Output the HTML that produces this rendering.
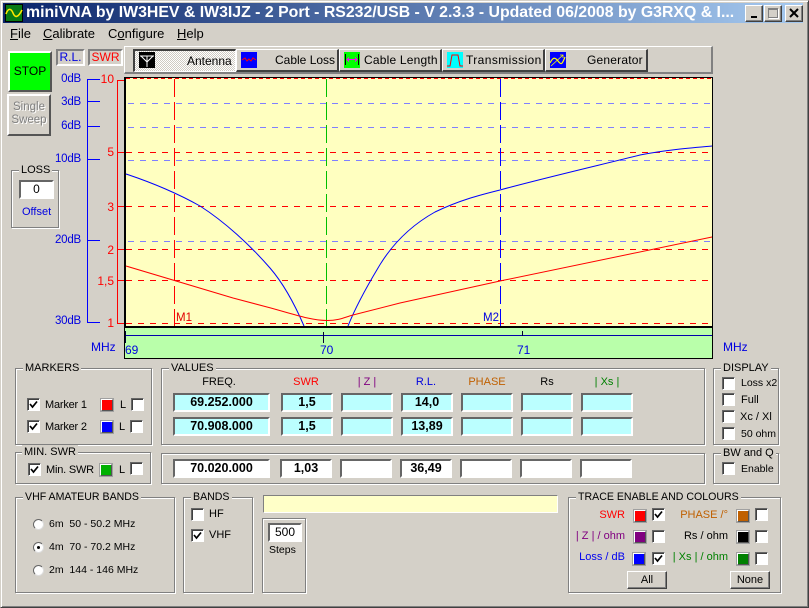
<!DOCTYPE html>
<html><head><meta charset="utf-8"><title>miniVNA</title>
<style>
html,body{margin:0;padding:0;width:809px;height:608px;overflow:hidden;background:#d4d0c8}
body{position:relative;font:11px/14px "Liberation Sans",sans-serif;color:#000}
div,svg{position:absolute;box-sizing:border-box}
svg{display:block;overflow:visible}
.t{white-space:nowrap;height:14px}
.r{color:#f00;font-size:12px}
.rb{font-size:12px;color:#0000e0}
.db{font-size:11.5px;color:#0000e0;letter-spacing:-.2px}
.up{background:#d4d0c8;border:1px solid;border-color:#fff #404040 #404040 #fff;box-shadow:inset -1px -1px 0 #808080}
.in{border:2px solid;border-color:#666 #fff #fff #666;background:#fff;font:bold 12.5px/14px "Liberation Sans",sans-serif;text-align:center}
.c{background:#bbffff}
.g{border:1px solid #808080;box-shadow:1px 1px 0 #fff,inset 1px 1px 0 #fff}
.l{position:absolute;top:-8px;background:#d4d0c8;padding:0 2px;white-space:nowrap}
.cb{width:13px;height:13px;border:1px solid;border-color:#666 #fff #fff #666;background:#fff;box-shadow:inset 1px 1px 0 #404040}
.cb svg{left:1px;top:1px}
.col{width:14px;height:14px;border:2px solid;border-color:#fff #555 #555 #fff;outline:1px solid #a0a0a0;outline-offset:-1px}
.tb{height:23px;background:#d4d0c8;border:1px solid;border-color:#fff #404040 #404040 #fff;font-size:12px;line-height:21px;white-space:nowrap}
.ic{width:16px;height:16px;top:52px}
.h{text-align:center;font-size:11px;width:60px;top:375px}
.rad{width:11px;height:11px;border-radius:50%;background:#fff;border:1px solid;border-color:#666 #ddd #ddd #666}
</style></head><body>
<!-- window frame -->
<div style="left:0;top:0;width:809px;height:608px;border:1px solid;border-color:#d4d0c8 #404040 #404040 #d4d0c8;box-shadow:inset 1px 1px 0 #fff,inset -1px -1px 0 #808080"></div>
<!-- title bar -->
<div style="left:3px;top:3px;width:800px;height:20px;background:linear-gradient(90deg,#0a246a,#a6caf0)"></div>
<svg style="left:5px;top:4px" width="18" height="18"><rect x="0.5" y="0.5" width="17" height="17" fill="#0a7a14" stroke="#000"/><path d="M1 10 C3 4 6 4 8 9 S13 14 17 6" fill="none" stroke="#ffe800" stroke-width="1.6"/></svg>
<div class="t" style="left:26px;top:4px;height:18px;color:#fff;font:bold 15.85px/18px 'Liberation Sans',sans-serif">miniVNA by IW3HEV &amp; IW3IJZ - 2 Port - RS232/USB - V 2.3.3 - Updated 06/2008 by G3RXQ &amp; I...</div>
<div class="up" style="left:745px;top:5px;width:18px;height:17px"><div style="left:5px;top:10px;width:6px;height:2px;background:#000"></div></div>
<div class="up" style="left:764px;top:5px;width:18px;height:17px"><div style="left:3px;top:2px;width:10px;height:10px;border:1px solid #808080;border-top-width:2px;box-shadow:1px 1px 0 #fff"></div></div>
<div class="up" style="left:785px;top:5px;width:18px;height:17px"><svg style="left:3px;top:2px" width="10" height="10"><path d="M1 1L9 9M9 1L1 9" stroke="#000" stroke-width="2"/></svg></div>
<!-- menu -->
<div class="t" style="left:10px;top:27px;font-size:13px"><u>F</u>ile</div>
<div class="t" style="left:43px;top:27px;font-size:13px"><u>C</u>alibrate</div>
<div class="t" style="left:108px;top:27px;font-size:13px">C<u>o</u>nfigure</div>
<div class="t" style="left:177px;top:27px;font-size:13px"><u>H</u>elp</div>
<!-- stop / sweep -->
<div style="left:8px;top:51px;width:44px;height:41px;background:#00ff00;border:2px solid;border-color:#fff #555 #555 #fff;text-align:center;font-size:12px;line-height:37px">STOP</div>
<div style="left:7px;top:94px;width:44px;height:42px;background:#d4d0c8;border:2px solid;border-color:#fff #555 #555 #fff;text-align:center;font-size:11.5px;line-height:13px;padding-top:5px;color:#808080;text-shadow:1px 1px 0 #fff">Single<br>Sweep</div>
<div style="left:56px;top:49px;width:29px;height:17px;border:2px solid;border-color:#808080 #fff #fff #808080;color:#0000e0;font-size:12px;line-height:13px;text-align:center">R.L.</div>
<div style="left:88px;top:49px;width:35px;height:17px;border:2px solid;border-color:#808080 #fff #fff #808080;color:#f00;font-size:12px;line-height:13px;text-align:center">SWR</div>
<!-- toolbar -->
<div style="left:124px;top:46px;width:589px;height:28px;border:1px solid;border-color:#fff #808080 #808080 #fff;border-width:1px 2px 2px 1px"></div>
<div class="tb" style="left:133px;top:49px;width:103px;border-color:#404040 #fff #fff #404040;border-width:2px 1px 1px 2px;background:repeating-conic-gradient(#fff 0 25%,#cfcbc3 0 50%) 0 0/2px 2px"></div>
<div class="tb" style="left:236px;top:49px;width:103px;border-right-width:2px;border-bottom-width:2px"></div>
<div class="tb" style="left:339px;top:49px;width:103px;border-right-width:2px;border-bottom-width:2px"></div>
<div class="tb" style="left:442px;top:49px;width:103px;border-right-width:2px;border-bottom-width:2px"></div>
<div class="tb" style="left:545px;top:49px;width:103px;border-right-width:2px;border-bottom-width:2px"></div>
<div class="t" style="left:187px;top:54px;font-size:12px">Antenna</div>
<div class="t" style="left:275px;top:53px;font-size:12px">Cable Loss</div>
<div class="t" style="left:364px;top:53px;font-size:12px;letter-spacing:.2px">Cable Length</div>
<div class="t" style="left:466px;top:53px;font-size:12px;letter-spacing:.4px">Transmission</div>
<div class="t" style="left:587px;top:53px;font-size:12px;letter-spacing:.2px">Generator</div>
<svg class="ic" style="left:139px" viewBox="0 0 16 16"><rect width="16" height="16" fill="#000"/><path d="M1 4H15M8 4V15M2 4L8 10L14 4" fill="none" stroke="#fff"/></svg>
<svg class="ic" style="left:241px" viewBox="0 0 16 16"><rect width="16" height="16" fill="#00f"/><path d="M1 8L4 6L6 9L8 7L10 9L12 6L15 8" fill="none" stroke="#f00"/></svg>
<svg class="ic" style="left:344px" viewBox="0 0 16 16"><rect width="16" height="16" fill="#0f0"/><path d="M1.5 2V13M14.5 2V13" stroke="#000" fill="none"/><path d="M3 7.5H13M5 5.5L3 7.5L5 9.5M11 5.5L13 7.5L11 9.5" stroke="#f0f" fill="none"/></svg>
<svg class="ic" style="left:447px" viewBox="0 0 16 16"><rect width="16" height="16" fill="#0ff"/><path d="M0 14H3L5 3H11L13 14H16" fill="none" stroke="#f00"/></svg>
<svg class="ic" style="left:550px" viewBox="0 0 16 16"><rect width="16" height="16" fill="#00f"/><path d="M0 11C3 5 5 5 8 9S12 13 15 5" fill="none" stroke="#ff0" stroke-width="1.2"/><path d="M1 14L13 3M10 3H13V6" fill="none" stroke="#ff0" stroke-width=".8"/></svg>
<!-- plot -->
<svg style="left:0;top:0" width="809" height="608">
<rect x="124" y="77" width="589" height="282" fill="#000"/>
<rect x="126" y="78" width="586" height="248" fill="#ffffc0"/>
<rect x="125" y="328" width="587" height="30" fill="#b9ffaa"/>
<g stroke="#8080ff" stroke-dasharray="6 6" fill="none">
<path d="M128 103.500H710M128 127.500H710M128 160.500H710M128 241.500H710"/>
</g>
<g stroke="#f00" stroke-dasharray="6 6" fill="none">
<path d="M126 152.500H710M126 206.500H710M126 249.500H710M126 280.500H710M126 323.500H710"/>
<path d="M126 78.500H712" stroke-dasharray="4 3"/>
</g>
<g fill="none" stroke-dasharray="18 5">
<path d="M174.500 79V326" stroke="#f00"/>
<path d="M326.500 79V326" stroke="#00c000"/>
<path d="M500.500 79V326" stroke="#00f"/>
</g>
<path d="M126 174C150 182 175 192 200 206C225 222 250 245 270 268C283 283 295 305 304 326" fill="none" stroke="#00f"/>
<path d="M348 326C356 306 366 288 378 268C392 244 410 226 435 212C460 200 480 195 500 190C540 179 600 165 640 155C665 150 690 148 712 146" fill="none" stroke="#00f"/>
<path d="M126 266L233 298L267 307C290 313 310 320.500 327 320.500C340 320.500 345 317 353 315L400 303L500 281L712 237" fill="none" stroke="#f00"/>
<path d="M126 335.500H712" stroke="#00a"/>
<path d="M125.500 331V343M323.500 332V343M522.500 331V336" stroke="#003"/>
<!-- left axes -->
<path d="M87.500 79V322M87 79.500H100M87 101.500H100M87 126.500H100M87 159.500H100M87 240.500H100M87 322.500H100" stroke="#00f" fill="none"/>
<path d="M117.500 80V324M117 323.500H124M117 80.500H124M117 152.500H124M117 206.500H124M117 249.500H124M117 280.500H124" stroke="#f00" fill="none"/>
</svg>
<div class="t" style="left:176px;top:311px;color:#e00000;font-size:11.5px">M1</div>
<div class="t" style="left:483px;top:311px;color:#0000e0;font-size:11.5px">M2</div>
<div class="t rb" style="left:125px;top:343px">69</div>
<div class="t rb" style="left:320px;top:343px">70</div>
<div class="t rb" style="left:517px;top:343px">71</div>
<div class="t rb" style="left:91px;top:340px">MHz</div>
<div class="t rb" style="left:723px;top:340px">MHz</div>
<div class="t db" style="left:40px;width:41px;text-align:right;top:72px">0dB</div>
<div class="t db" style="left:40px;width:41px;text-align:right;top:95px">3dB</div>
<div class="t db" style="left:40px;width:41px;text-align:right;top:119px">6dB</div>
<div class="t db" style="left:40px;width:41px;text-align:right;top:152px">10dB</div>
<div class="t db" style="left:40px;width:41px;text-align:right;top:233px">20dB</div>
<div class="t db" style="left:40px;width:41px;text-align:right;top:314px">30dB</div>
<div class="t r" style="left:90px;width:24px;text-align:right;top:72px">10</div>
<div class="t r" style="left:90px;width:24px;text-align:right;top:145px">5</div>
<div class="t r" style="left:90px;width:24px;text-align:right;top:200px">3</div>
<div class="t r" style="left:90px;width:24px;text-align:right;top:243px">2</div>
<div class="t r" style="left:90px;width:24px;text-align:right;top:274px">1,5</div>
<div class="t r" style="left:90px;width:24px;text-align:right;top:316px">1</div>
<!-- loss -->
<div class="g" style="left:11px;top:170px;width:48px;height:58px"><div class="l" style="left:7px">LOSS</div></div>
<div class="in" style="left:19px;top:180px;width:35px;height:19px;font:12px/15px 'Liberation Sans',sans-serif">0</div>
<div class="t" style="left:22px;top:205px;color:#0000e0;font-size:11px">Offset</div>
<!-- markers -->
<div class="g" style="left:15px;top:368px;width:137px;height:77px"><div class="l" style="left:7px">MARKERS</div></div>
<div class="cb" style="left:27px;top:398px"><svg width="9" height="9"><path d="M1 4L3.500 7L8 1.500" fill="none" stroke="#000" stroke-width="1.700"/></svg></div>
<div class="t" style="left:45px;top:398px;letter-spacing:-.2px">Marker 1</div>
<div class="col" style="left:100px;top:398px;background:#f00"></div>
<div class="t" style="left:120px;top:398px">L</div>
<div class="cb" style="left:131px;top:398px"></div>
<div class="cb" style="left:27px;top:420px"><svg width="9" height="9"><path d="M1 4L3.500 7L8 1.500" fill="none" stroke="#000" stroke-width="1.700"/></svg></div>
<div class="t" style="left:45px;top:420px;letter-spacing:-.2px">Marker 2</div>
<div class="col" style="left:100px;top:420px;background:#00f"></div>
<div class="t" style="left:119px;top:420px">L</div>
<div class="cb" style="left:130px;top:420px"></div>
<div class="g" style="left:15px;top:452px;width:136px;height:32px"><div class="l" style="left:6px">MIN. SWR</div></div>
<div class="cb" style="left:28px;top:463px"><svg width="9" height="9"><path d="M1 4L3.500 7L8 1.500" fill="none" stroke="#000" stroke-width="1.700"/></svg></div>
<div class="t" style="left:46px;top:463px;letter-spacing:-.2px">Min. SWR</div>
<div class="col" style="left:99px;top:463px;background:#00b000"></div>
<div class="t" style="left:119px;top:463px">L</div>
<div class="cb" style="left:130px;top:462px"></div>
<!-- values -->
<div class="g" style="left:161px;top:368px;width:544px;height:77px"><div class="l" style="left:7px">VALUES</div></div>
<div class="t h" style="left:189px">FREQ.</div>
<div class="t h" style="left:276px;color:#f00">SWR</div>
<div class="t h" style="left:337px;color:#800080">| Z |</div>
<div class="t h" style="left:396px;color:#0000e0">R.L.</div>
<div class="t h" style="left:457px;color:#c06000">PHASE</div>
<div class="t h" style="left:517px">Rs</div>
<div class="t h" style="left:577px;color:#008000">| Xs |</div>
<div class="in c" style="left:173px;top:393px;width:97px;height:19px">69.252.000</div>
<div class="in c" style="left:281px;top:393px;width:52px;height:19px">1,5</div>
<div class="in c" style="left:341px;top:393px;width:52px;height:19px"></div>
<div class="in c" style="left:401px;top:393px;width:52px;height:19px">14,0</div>
<div class="in c" style="left:461px;top:393px;width:52px;height:19px"></div>
<div class="in c" style="left:521px;top:393px;width:52px;height:19px"></div>
<div class="in c" style="left:581px;top:393px;width:52px;height:19px"></div>
<div class="in c" style="left:173px;top:417px;width:97px;height:19px">70.908.000</div>
<div class="in c" style="left:281px;top:417px;width:52px;height:19px">1,5</div>
<div class="in c" style="left:341px;top:417px;width:52px;height:19px"></div>
<div class="in c" style="left:401px;top:417px;width:52px;height:19px">13,89</div>
<div class="in c" style="left:461px;top:417px;width:52px;height:19px"></div>
<div class="in c" style="left:521px;top:417px;width:52px;height:19px"></div>
<div class="in c" style="left:581px;top:417px;width:52px;height:19px"></div>
<div class="g" style="left:161px;top:453px;width:544px;height:31px"></div>
<div class="in" style="left:173px;top:459px;width:97px;height:19px">70.020.000</div>
<div class="in" style="left:280px;top:459px;width:52px;height:19px">1,03</div>
<div class="in" style="left:340px;top:459px;width:52px;height:19px"></div>
<div class="in" style="left:400px;top:459px;width:52px;height:19px">36,49</div>
<div class="in" style="left:460px;top:459px;width:52px;height:19px"></div>
<div class="in" style="left:520px;top:459px;width:52px;height:19px"></div>
<div class="in" style="left:580px;top:459px;width:52px;height:19px"></div>
<!-- display -->
<div class="g" style="left:713px;top:368px;width:66px;height:77px"><div class="l" style="left:7px">DISPLAY</div></div>
<div class="cb" style="left:722px;top:377px"></div><div class="t" style="left:741px;top:376px;font-size:10.5px">Loss x2</div>
<div class="cb" style="left:722px;top:393px"></div><div class="t" style="left:741px;top:393px">Full</div>
<div class="cb" style="left:722px;top:410px"></div><div class="t" style="left:740px;top:410px">Xc / Xl</div>
<div class="cb" style="left:722px;top:427px"></div><div class="t" style="left:741px;top:427px;font-size:10.5px">50 ohm</div>
<div class="g" style="left:713px;top:453px;width:66px;height:31px"><div class="l" style="left:7px">BW and Q</div></div>
<div class="cb" style="left:722px;top:462px"></div><div class="t" style="left:741px;top:462px;font-size:10.5px">Enable</div>
<!-- VHF -->
<div class="g" style="left:15px;top:497px;width:160px;height:96px"><div class="l" style="left:7px;font-size:10.6px">VHF AMATEUR BANDS</div></div>
<div class="rad" style="left:33px;top:519px"></div><div class="t" style="left:49px;top:517px;font-size:10.5px">6m&nbsp; 50 - 50.2 MHz</div>
<div class="rad" style="left:33px;top:542px"><div style="left:3px;top:3px;width:3px;height:3px;border-radius:50%;background:#000"></div></div><div class="t" style="left:49px;top:540px;font-size:10.5px">4m&nbsp; 70 - 70.2 MHz</div>
<div class="rad" style="left:33px;top:565px"></div><div class="t" style="left:49px;top:563px;font-size:10.5px">2m&nbsp; 144 - 146 MHz</div>
<!-- bands -->
<div class="g" style="left:183px;top:497px;width:70px;height:96px"><div class="l" style="left:7px;font-size:10.6px">BANDS</div></div>
<div class="cb" style="left:191px;top:508px"></div><div class="t" style="left:209px;top:507px">HF</div>
<div class="cb" style="left:191px;top:529px"><svg width="9" height="9"><path d="M1 4L3.500 7L8 1.500" fill="none" stroke="#000" stroke-width="1.700"/></svg></div><div class="t" style="left:209px;top:528px">VHF</div>
<!-- yellow + steps -->
<div style="left:263px;top:495px;width:295px;height:18px;background:#ffffc8;border:1px solid;border-color:#808080 #fff #fff #808080"></div>
<div class="g" style="left:262px;top:518px;width:44px;height:75px"></div>
<div class="in" style="left:268px;top:523px;width:34px;height:19px;font:12px/15px 'Liberation Sans',sans-serif">500</div>
<div class="t" style="left:269px;top:543px;font-size:10.5px">Steps</div>
<!-- trace -->
<div class="g" style="left:568px;top:497px;width:213px;height:96px"><div class="l" style="left:7px;font-size:10.6px">TRACE ENABLE AND COLOURS</div></div>
<div class="t" style="left:560px;width:65px;text-align:right;top:508px;color:#f00">SWR</div>
<div class="col" style="left:633px;top:509px;background:#f00"></div>
<div class="cb" style="left:652px;top:508px"><svg width="9" height="9"><path d="M1 4L3.500 7L8 1.500" fill="none" stroke="#000" stroke-width="1.700"/></svg></div>
<div class="t" style="left:560px;width:65px;text-align:right;top:529px;color:#800080">| Z | / ohm</div>
<div class="col" style="left:633px;top:530px;background:#800080"></div>
<div class="cb" style="left:652px;top:530px"></div>
<div class="t" style="left:560px;width:65px;text-align:right;top:550px;color:#0000f0">Loss / dB</div>
<div class="col" style="left:632px;top:552px;background:#00f"></div>
<div class="cb" style="left:652px;top:552px"><svg width="9" height="9"><path d="M1 4L3.500 7L8 1.500" fill="none" stroke="#000" stroke-width="1.700"/></svg></div>
<div class="t" style="left:660px;width:68px;text-align:right;top:508px;color:#c06000">PHASE /°</div>
<div class="col" style="left:736px;top:509px;background:#c06000"></div>
<div class="cb" style="left:755px;top:508px"></div>
<div class="t" style="left:660px;width:68px;text-align:right;top:529px">Rs / ohm</div>
<div class="col" style="left:736px;top:530px;background:#000"></div>
<div class="cb" style="left:755px;top:530px"></div>
<div class="t" style="left:660px;width:68px;text-align:right;top:550px;color:#008000">| Xs | / ohm</div>
<div class="col" style="left:736px;top:552px;background:#008000"></div>
<div class="cb" style="left:755px;top:552px"></div>
<div class="up" style="left:627px;top:571px;width:40px;height:18px;text-align:center;line-height:16px">All</div>
<div class="up" style="left:730px;top:571px;width:40px;height:18px;text-align:center;line-height:16px">None</div>
</body></html>
